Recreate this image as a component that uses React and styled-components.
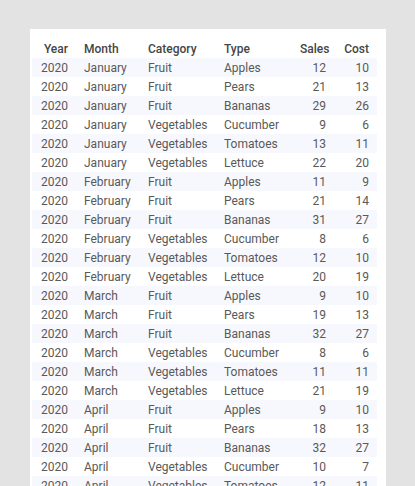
import React from 'react';
import styled, { createGlobalStyle } from 'styled-components';

const GlobalStyle = createGlobalStyle`
  html, body {
    margin: 0;
    padding: 0;
    background: #e3e3e3;
    font-family: Roboto, "Liberation Sans", sans-serif;
  }
`;

const Page = styled.div`
  padding: 29px 29px 0 30px;
`;

const Card = styled.div`
  background: #fff;
  padding: 10px 9px 0 2px;
`;

const Table = styled.table`
  border-collapse: collapse;
  table-layout: fixed;
  width: 345px;
  font-size: 12px;
  color: #595959;
`;

const HeadCell = styled.th`
  height: 19px;
  padding: 0 8px;
  font-weight: 500;
  color: #454545;
  text-align: ${props => (props.$right ? 'right' : 'left')};
  white-space: nowrap;
`;

const Row = styled.tr`
  background: ${props => (props.$striped ? '#f7f8fd' : '#fff')};
`;

const Cell = styled.td`
  height: 19px;
  padding: 0 8px;
  text-align: ${props => (props.$right ? 'right' : 'left')};
  white-space: nowrap;
`;

const columns = [
  { key: 'year', label: 'Year', width: 44, right: true },
  { key: 'month', label: 'Month', width: 64 },
  { key: 'category', label: 'Category', width: 76 },
  { key: 'type', label: 'Type', width: 76 },
  { key: 'sales', label: 'Sales', width: 42, right: true },
  { key: 'cost', label: 'Cost', width: 43, right: true }
];

const values = {
  January: [[12, 10], [21, 13], [29, 26], [9, 6], [13, 11], [22, 20]],
  February: [[11, 9], [21, 14], [31, 27], [8, 6], [12, 10], [20, 19]],
  March: [[9, 10], [19, 13], [32, 27], [8, 6], [11, 11], [21, 19]],
  April: [[9, 10], [18, 13], [32, 27], [10, 7], [12, 11], [21, 18]]
};

const products = [
  ['Fruit', 'Apples'],
  ['Fruit', 'Pears'],
  ['Fruit', 'Bananas'],
  ['Vegetables', 'Cucumber'],
  ['Vegetables', 'Tomatoes'],
  ['Vegetables', 'Lettuce']
];

const rows = Object.keys(values).flatMap(month =>
  products.map(([category, type], i) => ({
    year: 2020,
    month,
    category,
    type,
    sales: values[month][i][0],
    cost: values[month][i][1]
  }))
);

export default function App() {
  return (
    <Page>
      <GlobalStyle />
      <Card>
        <Table>
          <colgroup>
            {columns.map(c => (
              <col key={c.key} style={{ width: c.width }} />
            ))}
          </colgroup>
          <thead>
            <tr>
              {columns.map(c => (
                <HeadCell key={c.key} $right={c.right}>
                  {c.label}
                </HeadCell>
              ))}
            </tr>
          </thead>
          <tbody>
            {rows.map((r, i) => (
              <Row key={i} $striped={i % 2 === 0}>
                {columns.map(c => (
                  <Cell key={c.key} $right={c.right}>
                    {r[c.key]}
                  </Cell>
                ))}
              </Row>
            ))}
          </tbody>
        </Table>
      </Card>
    </Page>
  );
}
